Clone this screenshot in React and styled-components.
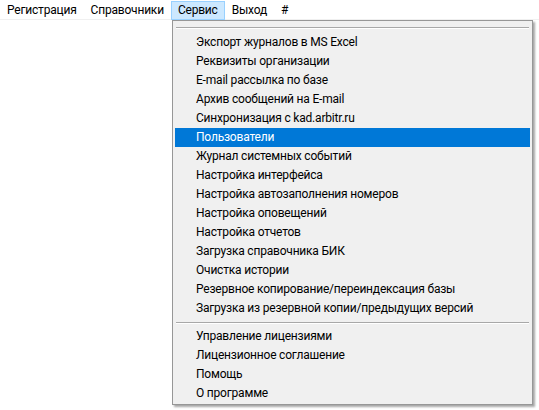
import React from "react";
import styled, { createGlobalStyle } from "styled-components";

const Global = createGlobalStyle`
  html, body { margin: 0; padding: 0; background: #ffffff; }
  body {
    font-family: Roboto, "Liberation Sans", sans-serif;
    font-size: 12px;
    letter-spacing: -0.2px;
    color: #000000;
  }
  #root { width: 539px; height: 410px; overflow: hidden; }
`;

const Page = styled.div`
  position: relative;
  width: 539px;
  height: 410px;
  background: #ffffff;
`;

const MenuBar = styled.nav`
  display: flex;
  align-items: flex-start;
  height: 20px;
  padding-top: 1px;
  box-sizing: border-box;
  background: #ffffff;
  border-bottom: 1px solid #f0f0f0;
`;

const BarItem = styled.div`
  position: relative;
  height: 19px;
  line-height: 17px;
  padding: 0 6px;
  box-sizing: border-box;
  border: 1px solid ${(p) => (p.$open ? "#99d1ff" : "transparent")};
  background: ${(p) => (p.$open ? "#cce8ff" : "transparent")};
  white-space: nowrap;
`;

const Dropdown = styled.div`
  position: absolute;
  left: 172px;
  top: 20px;
  width: 361px;
  box-sizing: border-box;
  display: flex;
  flex-direction: column;
  padding: 2px 0 1px;
  background: #f0f0f0;
  border: 1px solid #979797;
  box-shadow: 2px 2px 2px rgba(0, 0, 0, 0.35);
  z-index: 10;
`;

const Separator = styled.div`
  height: ${(p) => p.$h}px;
  display: flex;
  flex-direction: column;
  padding: ${(p) => p.$top}px 3px 0;
  box-sizing: border-box;
  &::before {
    content: "";
    display: block;
    height: 1px;
    background: #a8a8a8;
  }
  &::after {
    content: "";
    display: block;
    height: 1px;
    background: #ffffff;
  }
`;

const Item = styled.div`
  height: 19px;
  line-height: 19px;
  margin: 0 2px;
  padding-left: 21px;
  white-space: nowrap;
  background: ${(p) => (p.$active ? "#0078d7" : "transparent")};
  color: ${(p) => (p.$active ? "#ffffff" : "#000000")};
`;

const bar = [
  { label: "Регистрация" },
  { label: "Справочники" },
  { label: "Сервис", open: true },
  { label: "Выход" },
  { label: "#" },
];

const groupA = [
  "Экспорт журналов в MS Excel",
  "Реквизиты организации",
  "E-mail рассылка по базе",
  "Архив сообщений на E-mail",
  "Синхронизация с kad.arbitr.ru",
  "Пользователи",
  "Журнал системных событий",
  "Настройка интерфейса",
  "Настройка автозаполнения номеров",
  "Настройка оповещений",
  "Настройка отчетов",
  "Загрузка справочника БИК",
  "Очистка истории",
  "Резервное копирование/переиндексация базы",
  "Загрузка из резервной копии/предыдущих версий",
];

const groupB = [
  "Управление лицензиями",
  "Лицензионное соглашение",
  "Помощь",
  "О программе",
];

export default function App() {
  return (
    <Page>
      <Global />
      <MenuBar>
        {bar.map((b) => (
          <BarItem key={b.label} $open={b.open}>
            {b.label}
          </BarItem>
        ))}
      </MenuBar>
      <Dropdown>
        <Separator $h={10} $top={4} />
        {groupA.map((t) => (
          <Item key={t} $active={t === "Пользователи"}>
            {t}
          </Item>
        ))}
        <Separator $h={9} $top={4} />
        {groupB.map((t) => (
          <Item key={t}>{t}</Item>
        ))}
      </Dropdown>
    </Page>
  );
}
